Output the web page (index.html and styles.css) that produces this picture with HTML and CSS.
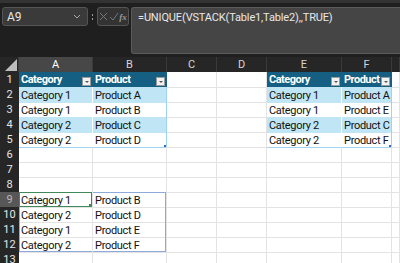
FILE: index.html
```html
<!DOCTYPE html>
<html lang="en">

<head>
    <meta charset="UTF-8">
    <title>UNIQUE VSTACK</title>
    <link rel="stylesheet" href="styles.css">
</head>

<body>
    <div class="topbar">
        <div class="namebox">
            <span>A9</span>
            <svg class="chev" width="8" height="5" viewBox="0 0 8 5"><path d="M1 1 L4 4 L7 1" fill="none" stroke="#aaa" stroke-width="1"/></svg>
        </div>
        <div class="dots"><i></i><i></i></div>
        <div class="fxbox">
            <svg width="9" height="9" viewBox="0 0 9 9"><path d="M1 1 L8 8 M8 1 L1 8" stroke="#777" stroke-width="1"/></svg>
            <svg width="10" height="9" viewBox="0 0 10 9"><path d="M1 5 L4 8 L9 1" fill="none" stroke="#777" stroke-width="1"/></svg>
            <span class="fx">fx</span>
        </div>
        <div class="formula">=UNIQUE(VSTACK(Table1,Table2),,TRUE)</div>
    </div>

    <div class="sheet">
        <div class="row colheads">
            <div class="corner"><svg width="12" height="12" viewBox="0 0 12 12"><path d="M12 0 L12 12 L0 12 Z" fill="#bdbdbd"/></svg></div>
            <div class="ch sel">A</div>
            <div class="ch">B</div>
            <div class="ch">C</div>
            <div class="ch">D</div>
            <div class="ch">E</div>
            <div class="ch">F</div>
            <div class="ch"></div>
        </div>

        <div class="row">
            <div class="rh">1</div>
            <div class="c th">Category<b class="filt"></b></div>
            <div class="c th">Product<b class="filt"></b></div>
            <div class="c"></div>
            <div class="c"></div>
            <div class="c th">Category<b class="filt"></b></div>
            <div class="c th">Product<b class="filt"></b></div>
            <div class="c"></div>
        </div>
        <div class="row">
            <div class="rh">2</div>
            <div class="c tb band">Category 1</div>
            <div class="c tb band tr">Product A</div>
            <div class="c"></div>
            <div class="c"></div>
            <div class="c tb band">Category 1</div>
            <div class="c tb band tr">Product A</div>
            <div class="c"></div>
        </div>
        <div class="row">
            <div class="rh">3</div>
            <div class="c tb">Category 1</div>
            <div class="c tb tr">Product B</div>
            <div class="c"></div>
            <div class="c"></div>
            <div class="c tb">Category 1</div>
            <div class="c tb tr">Product E</div>
            <div class="c"></div>
        </div>
        <div class="row">
            <div class="rh">4</div>
            <div class="c tb band">Category 2</div>
            <div class="c tb band tr">Product C</div>
            <div class="c"></div>
            <div class="c"></div>
            <div class="c tb band">Category 2</div>
            <div class="c tb band tr">Product C</div>
            <div class="c"></div>
        </div>
        <div class="row">
            <div class="rh">5</div>
            <div class="c tb last">Category 2</div>
            <div class="c tb tr last grip">Product D</div>
            <div class="c"></div>
            <div class="c"></div>
            <div class="c tb last">Category 2</div>
            <div class="c tb tr last grip">Product F</div>
            <div class="c"></div>
        </div>

        <div class="row">
            <div class="rh">6</div>
            <div class="c"></div><div class="c"></div><div class="c"></div><div class="c"></div><div class="c"></div><div class="c"></div><div class="c"></div>
        </div>
        <div class="row">
            <div class="rh">7</div>
            <div class="c"></div><div class="c"></div><div class="c"></div><div class="c"></div><div class="c"></div><div class="c"></div><div class="c"></div>
        </div>
        <div class="row">
            <div class="rh">8</div>
            <div class="c"></div><div class="c"></div><div class="c"></div><div class="c"></div><div class="c"></div><div class="c"></div><div class="c"></div>
        </div>

        <div class="row">
            <div class="rh sel">9</div>
            <div class="c active">Category 1<b class="handle"></b></div>
            <div class="c sp-top sp-right">Product B</div>
            <div class="c"></div><div class="c"></div><div class="c"></div><div class="c"></div><div class="c"></div>
        </div>
        <div class="row">
            <div class="rh">10</div>
            <div class="c sp-left">Category 2</div>
            <div class="c sp-right">Product D</div>
            <div class="c"></div><div class="c"></div><div class="c"></div><div class="c"></div><div class="c"></div>
        </div>
        <div class="row">
            <div class="rh">11</div>
            <div class="c sp-left">Category 1</div>
            <div class="c sp-right">Product E</div>
            <div class="c"></div><div class="c"></div><div class="c"></div><div class="c"></div><div class="c"></div>
        </div>
        <div class="row">
            <div class="rh">12</div>
            <div class="c sp-left sp-bottom">Category 2</div>
            <div class="c sp-right sp-bottom">Product F</div>
            <div class="c"></div><div class="c"></div><div class="c"></div><div class="c"></div><div class="c"></div>
        </div>
        <div class="row short">
            <div class="rh">13</div>
            <div class="c"></div><div class="c"></div><div class="c"></div><div class="c"></div><div class="c"></div><div class="c"></div><div class="c"></div>
        </div>
    </div>
</body>

</html>
```

FILE: styles.css
```css
* {
    margin: 0;
    padding: 0;
    box-sizing: border-box;
}

body {
    width: 400px;
    height: 263px;
    overflow: hidden;
    background-color: #ffffff;
    font-family: Roboto, 'Liberation Sans', sans-serif;
    font-size: 11px;
}

/* formula bar */
.topbar {
    height: 57px;
    background-color: #1f1f1f;
    border-top: 3px solid #333333;
    display: flex;
    align-items: flex-start;
    padding: 4px 0 0 2px;
    color: #e8e8e8;
}

.namebox {
    width: 86px;
    height: 19px;
    background-color: #3a3a3a;
    border: 1px solid #555555;
    border-radius: 3px;
    display: flex;
    align-items: center;
    justify-content: space-between;
    padding: 0 6px 0 4px;
    font-size: 12px;
}

.dots {
    width: 9px;
    height: 19px;
    display: flex;
    flex-direction: column;
    align-items: center;
    justify-content: center;
    gap: 2px;
}

.dots i {
    width: 1px;
    height: 2px;
    background-color: #999999;
}

.fxbox {
    width: 32px;
    height: 19px;
    border: 1px solid #555555;
    border-radius: 3px;
    background-color: #333333;
    display: flex;
    align-items: center;
    justify-content: space-around;
    padding: 0 1px;
}

.fx {
    color: #999999;
    font-style: italic;
    font-weight: bold;
    font-size: 9px;
    font-family: 'Liberation Serif', serif;
}

.formula {
    flex: 1;
    height: 47px;
    margin-left: 2px;
    background-color: #454545;
    border: 1px solid #5a5a5a;
    border-right: none;
    border-radius: 3px 0 0 3px;
    padding: 3px 6px;
    font-size: 11px;
    letter-spacing: -0.15px;
}

/* grid */
.row {
    display: grid;
    grid-template-columns: 19px 74px 74px 50px 50px 75px 50px 8px;
    height: 15px;
}

.row.short {
    height: 11px;
}

.colheads {
    background-color: #262626;
}

.corner {
    display: flex;
    align-items: flex-end;
    justify-content: flex-end;
    padding: 0 1px 1px 0;
    border-right: 1px solid #3a3a3a;
}

.ch {
    color: #d6d6d6;
    text-align: center;
    line-height: 15px;
    font-size: 11px;
    border-right: 1px solid #3a3a3a;
}

.ch.sel {
    background-color: #474747;
    color: #ffffff;
}

.rh {
    background-color: #262626;
    color: #e6e6e6;
    text-align: center;
    padding-top: 1px;
    line-height: 14px;
    border-bottom: 1px solid #3a3a3a;
    white-space: nowrap;
}

.rh.sel {
    background-color: #575757;
    color: #b8b8b8;
}

.c {
    border-right: 1px solid #e3e3e3;
    border-bottom: 1px solid #e3e3e3;
    padding: 1px 0 0 2px;
    line-height: 15px;
    letter-spacing: -0.3px;
    color: #111111;
    white-space: nowrap;
    overflow: hidden;
    position: relative;
}

/* excel tables */
.th {
    background-color: #155f82;
    color: #ffffff;
    font-weight: bold;
    letter-spacing: -0.5px;
    border-right: 1px solid #155f82;
    border-bottom: 1px solid #155f82;
    display: flex;
    justify-content: space-between;
    align-items: flex-end;
    padding: 0 1px 1px 2px;
    line-height: 13px;
}

.filt {
    width: 9px;
    height: 9px;
    flex-shrink: 0;
    background-color: #f2f2f2;
    border: 1px solid #9a9a9a;
    position: relative;
}

.filt::after {
    content: "";
    position: absolute;
    left: 2px;
    top: 3px;
    border-left: 2px solid transparent;
    border-right: 2px solid transparent;
    border-top: 2px solid #555555;
}

.tb {
    border-right: 1px solid #ffffff;
    border-bottom: 1px solid #c0e6f5;
}

.band {
    background-color: #c0e6f5;
    border-bottom-color: #c0e6f5;
}

.tr {
    border-right: 1px solid #9fd3ef;
}

.last {
    border-bottom: 1px solid #9fd3ef;
}

.grip::after {
    content: "";
    position: absolute;
    right: 0;
    bottom: 0;
    width: 2px;
    height: 2px;
    background-color: #3a66c4;
}

/* spill range and active cell */
.active {
    box-shadow: inset 0 0 0 1px #3f8a58;
}

.handle {
    position: absolute;
    right: 0;
    bottom: 0;
    width: 3px;
    height: 3px;
    background-color: #3f8a58;
}

.sp-top {
    box-shadow: inset 0 1px 0 #8eaadb;
}

.sp-top.sp-right {
    box-shadow: inset 0 1px 0 #8eaadb, inset -1px 0 0 #8eaadb;
}

.sp-left {
    box-shadow: inset 1px 0 0 #8eaadb;
}

.sp-right {
    box-shadow: inset -1px 0 0 #8eaadb;
}

.sp-left.sp-bottom {
    box-shadow: inset 1px 0 0 #8eaadb, inset 0 -1px 0 #8eaadb;
}

.sp-right.sp-bottom {
    box-shadow: inset -1px 0 0 #8eaadb, inset 0 -1px 0 #8eaadb;
}
```
